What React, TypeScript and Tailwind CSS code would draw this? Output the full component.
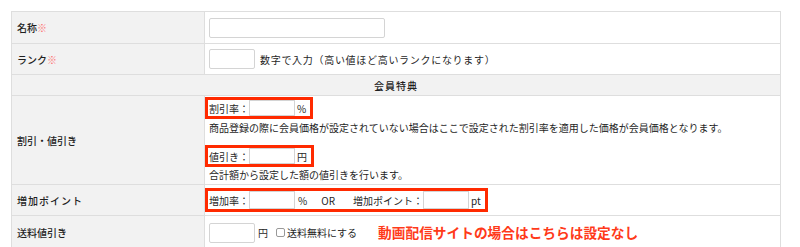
const font = { fontFamily: '"Noto Sans CJK JP", "Noto Sans", sans-serif' };

function Req() {
  return <span className="text-[#ff6b6b]">※</span>;
}

function Box({ children, tall }: { children: React.ReactNode; tall?: boolean }) {
  return (
    <div
      className={
        "-ml-[4px] inline-flex items-center whitespace-nowrap border-[3px] border-[#ff2a00] pl-[1px] pr-[4px] " +
        (tall ? "h-[24px]" : "h-[22px]")
      }
    >
      {children}
    </div>
  );
}

function SmallInput({ tall }: { tall?: boolean }) {
  return (
    <input
      type="text"
      className={
        "w-[46px] shrink-0 border border-[#d4d4d4] bg-white " + (tall ? "h-[18px]" : "h-[16px]")
      }
    />
  );
}

export default function App() {
  return (
    <div
      className="h-[247px] w-[800px] overflow-hidden bg-white pl-[11px] pt-[11px] text-[10px] leading-[15px] text-[#1f1f1f]"
      style={font}
    >
      <table className="w-[770px] border-collapse">
        <tbody>
          <tr className="h-[32px]">
            <th className="w-[193px] border border-[#dedede] bg-[#f2f2f2] pl-[5px] text-left font-medium">
              名称<Req />
            </th>
            <td className="border border-[#dedede] pl-[4px]">
              <input type="text" className="block h-[20px] w-[176px] rounded-[2px] border border-[#d4d4d4]" />
            </td>
          </tr>
          <tr className="h-[31px]">
            <th className="border border-[#dedede] bg-[#f2f2f2] pl-[5px] text-left font-medium">
              ランク<Req />
            </th>
            <td className="border border-[#dedede] pl-[4px]">
              <div className="flex items-center">
                <input type="text" className="h-[20px] w-[46px] rounded-[2px] border border-[#d4d4d4]" />
                <span className="ml-[5px] tracking-[0.7px]">数字で入力（高い値ほど高いランクになります）</span>
              </div>
            </td>
          </tr>
          <tr className="h-[21px]">
            <th colSpan={2} className="border border-[#dedede] bg-[#f2f2f2] text-center font-medium tracking-[1px]">
              会員特典
            </th>
          </tr>
          <tr className="h-[89px]">
            <th className="border border-[#dedede] bg-[#f2f2f2] pl-[5px] text-left font-medium">
              割引・値引き
            </th>
            <td className="border border-[#dedede] pl-[4px] align-top">
              <div className="pt-[1px]">
                <Box>
                  <span className="w-[40px] shrink-0">割引率：</span>
                  <SmallInput />
                  <span className="ml-[2px]">%</span>
                </Box>
              </div>
              <div className="leading-[17px]">
                商品登録の際に会員価格が設定されていない場合はここで設定された割引率を適用した価格が会員価格となります。
              </div>
              <div className="mt-[9px]">
                <Box>
                  <span className="w-[40px] shrink-0">値引き：</span>
                  <SmallInput />
                  <span className="ml-[2px]">円</span>
                </Box>
              </div>
              <div className="leading-[15px]">合計額から設定した額の値引きを行います。</div>
            </td>
          </tr>
          <tr className="h-[31px]">
            <th className="border border-[#dedede] bg-[#f2f2f2] pl-[5px] text-left font-medium tracking-[1px]">
              増加ポイント
            </th>
            <td className="border border-[#dedede] pl-[4px]">
              <Box tall>
                <span className="w-[40px] shrink-0">増加率：</span>
                <SmallInput tall />
                <span className="ml-[3px]">%</span>
                <span className="ml-[14px]">OR</span>
                <span className="ml-[18px] w-[70px] shrink-0">増加ポイント：</span>
                <SmallInput tall />
                <span className="ml-[2px]">pt</span>
              </Box>
            </td>
          </tr>
          <tr className="h-[34px]">
            <th className="border border-[#dedede] bg-[#f2f2f2] pl-[5px] text-left font-medium">
              送料値引き
            </th>
            <td className="border border-[#dedede] pl-[4px]">
              <div className="flex items-center whitespace-nowrap">
                <input type="text" className="h-[20px] w-[46px] rounded-[2px] border border-[#d4d4d4]" />
                <span className="ml-[3px]">円</span>
                <span className="ml-[8px] inline-block h-[9px] w-[9px] rounded-[2px] border border-[#999]" />
                <span className="ml-[2px]">送料無料にする</span>
                <span className="ml-[21px] text-[13.7px] font-bold text-[#ff3a1a]">
                  動画配信サイトの場合はこちらは設定なし
                </span>
              </div>
            </td>
          </tr>
        </tbody>
      </table>
    </div>
  );
}
